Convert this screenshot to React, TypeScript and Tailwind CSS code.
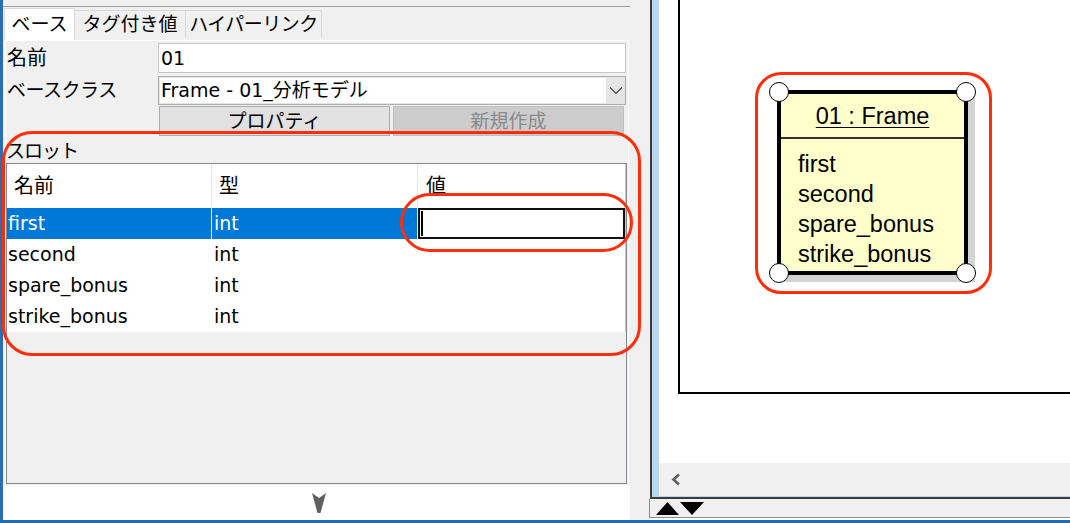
import React from "react";

const JP = { fontFamily: '"DejaVu Sans", "Noto Sans CJK JP", sans-serif' };
const ARIAL = { fontFamily: '"Liberation Sans", Arial, sans-serif' };

function Tabs() {
  return (
    <div className="flex h-[33px] items-start pl-[1px]">
      <div className="mt-[1px] flex h-[32px] w-[71px] items-center justify-center border-l border-t border-r border-[#d9d9d9] bg-white text-[19px] text-black">
        ベース
      </div>
      <div className="mt-[3px] flex h-[28px] w-[111px] items-center justify-center border-t border-r border-[#d9d9d9] bg-[#f0f0f0] text-[19px] text-black">
        タグ付き値
      </div>
      <div className="mt-[3px] flex h-[28px] w-[136px] items-center justify-center border-t border-r border-[#d9d9d9] bg-[#f0f0f0] text-[19px] tracking-[-0.5px] text-black">
        ハイパーリンク
      </div>
    </div>
  );
}

function Chevron() {
  return (
    <svg width="14" height="9" viewBox="0 0 14 9">
      <polyline points="1,1.5 7,7.5 13,1.5" fill="none" stroke="#444" strokeWidth="1.2" />
    </svg>
  );
}

const rows = [
  { name: "first", type: "int", sel: true },
  { name: "second", type: "int" },
  { name: "spare_bonus", type: "int" },
  { name: "strike_bonus", type: "int" },
];

function SlotTable() {
  return (
    <div className="flex h-[321px] w-[621px] flex-col border border-[#828790] bg-[#f0f0f0]">
      <div className="flex h-[44px] bg-white text-[20px] text-black">
        <div className="flex w-[205px] items-center border-r border-[#e5e5e5] pl-[7px]">名前</div>
        <div className="flex w-[206px] items-center border-r border-[#e5e5e5] pl-[7px]">型</div>
        <div className="flex flex-1 items-center border-r border-[#c8c8c8] pl-[8px]">値</div>
      </div>
      {rows.map((r) => (
        <div key={r.name} className="flex h-[31px] bg-white text-[19px]">
          <div
            className={
              r.sel
                ? "flex w-[205px] items-center border-r border-white bg-[#0078d7] pl-[1px] text-white"
                : "flex w-[205px] items-center border-r border-white pl-[1px] text-black"
            }
          >
            {r.name}
          </div>
          <div
            className={
              r.sel
                ? "flex w-[206px] items-center border-r border-white bg-[#0078d7] pl-[2px] text-white"
                : "flex w-[206px] items-center border-r border-white pl-[2px] text-black"
            }
          >
            {r.type}
          </div>
          <div className="flex flex-1 items-stretch border-r border-[#c8c8c8]">
            {r.sel ? (
              <div className="flex flex-1 items-center border-2 border-[#111] bg-white pl-[1px]">
                <div className="h-[25px] w-[2px] bg-black" />
              </div>
            ) : null}
          </div>
        </div>
      ))}
      <div className="flex-1" />
    </div>
  );
}

function LeftPanel() {
  return (
    <div className="flex w-[627px] flex-col">
      <div className="h-[6px]" />
      <div className="h-px bg-[#a0a0a0]" />
      <Tabs />
      <div className="ml-[2px] flex h-[445px] w-[624px] flex-col border-l border-t border-r border-white bg-[#f0f0f0] pt-[2px]">
        <div className="flex h-[30px] items-center">
          <div className="w-[152px] pl-[1px] text-[20px] text-black">名前</div>
          <div className="flex h-[30px] w-[468px] items-center border border-[#c6c6c6] bg-white pl-[2px] text-[19px] text-black">
            01
          </div>
        </div>
        <div className="mt-[2px] flex h-[30px] items-center">
          <div className="w-[152px] pl-[1px] text-[19px] tracking-[-0.5px] text-black">ベースクラス</div>
          <div className="flex h-[29px] w-[468px] items-stretch border border-[#adadad] bg-[#e5e5e5]">
            <div className="m-[1px] flex w-[446px] items-center bg-white pl-[1px] text-[19px] text-black">
              Frame - 01_分析モデル
            </div>
            <div className="flex flex-1 items-center justify-center">
              <Chevron />
            </div>
          </div>
        </div>
        <div className="mt-[1px] flex h-[30px] pl-[152px]">
          <div className="ml-[1px] flex w-[231px] items-center justify-center border border-[#adadad] bg-[#e1e1e1] text-[19px] text-black">
            プロパティ
          </div>
          <div className="ml-[3px] flex w-[231px] items-center justify-center border border-[#bfbfbf] bg-[#cccccc] text-[19px] text-[#8a8a8a]">
            新規作成
          </div>
        </div>
        <div className="flex h-[27px] items-end pb-[1px] text-[19px] leading-[22px] tracking-[-1px] text-black">スロット</div>
        <SlotTable />
      </div>
      <div className="flex h-[35px] items-start justify-center bg-white pl-[4px] pt-[8px]">
        <svg width="14" height="20" viewBox="0 0 14 20">
          <polygon points="0,0 7,5 14,0 8.5,20 5.5,20" fill="#606060" />
        </svg>
      </div>
    </div>
  );
}

function Canvas() {
  return (
    <div className="relative flex-1 overflow-hidden bg-white">
      <div className="absolute left-[19px] top-[-10px] h-[404px] w-[520px] border-2 border-black" />
      <div className="absolute left-[96px] top-[72px] h-[222px] w-[237px] rounded-[26px] border-[3.5px] border-[#ff2d0a]" />
      <div className="absolute left-[118px] top-[90px] h-[185px] w-[191px]">
        <div
          className="flex h-full w-full flex-col border-4 border-black bg-[#ffffcc] shadow-[7px_7px_0_#d4d4d4]"
          style={ARIAL}
        >
          <div className="flex h-[43px] items-center justify-center pt-[3px] text-[23.5px] text-black">
            <span className="underline decoration-1 underline-offset-[3px]">01 : Frame</span>
          </div>
          <div className="h-[2px] bg-[#333]" />
          <div className="flex flex-col pl-[17px] pt-[10px] text-[23.5px] leading-[30px] text-black">
            <div>first</div>
            <div>second</div>
            <div>spare_bonus</div>
            <div>strike_bonus</div>
          </div>
        </div>
        <div className="absolute left-[-8px] top-[-8px] h-[20px] w-[20px] rounded-full border-[1.5px] border-black bg-white" />
        <div className="absolute right-[-8px] top-[-8px] h-[20px] w-[20px] rounded-full border-[1.5px] border-black bg-white" />
        <div className="absolute bottom-[-8px] left-[-8px] h-[20px] w-[20px] rounded-full border-[1.5px] border-black bg-white" />
        <div className="absolute bottom-[-8px] right-[-8px] h-[20px] w-[20px] rounded-full border-[1.5px] border-black bg-white" />
      </div>
    </div>
  );
}

function RightPanel() {
  return (
    <div className="flex w-[421px] flex-col">
      <div className="ml-[1px] flex h-[499px] flex-col border-b-2 border-l-2 border-[#3c3c3c]">
        <div className="flex flex-1 border-b border-[#bcd6ee]">
          <div className="w-[7px] bg-[#bcd6ee]" />
          <div className="flex flex-1 flex-col">
            <Canvas />
            <div className="flex h-[33px] items-center bg-[#f0f0f0] pl-[12px]">
              <svg width="10" height="13" viewBox="0 0 10 13">
                <polyline points="8,1.5 2.5,6.5 8,11.5" fill="none" stroke="#606060" strokeWidth="2.6" />
              </svg>
            </div>
          </div>
        </div>
      </div>
      <div className="flex h-[19px] items-start gap-[1px] border-b border-l border-[#8a8a8a] pl-[6px] pt-[3px]">
        <svg width="23" height="13" viewBox="0 0 23 13">
          <polygon points="11.5,0 23,13 0,13" fill="#000" />
        </svg>
        <svg width="24" height="13" viewBox="0 0 24 13">
          <polygon points="0,0 24,0 12,13" fill="#000" />
        </svg>
      </div>
      <div className="h-[2px] bg-white" />
    </div>
  );
}

export default function App() {
  return (
    <div className="relative flex h-[523px] w-[1070px] flex-col overflow-hidden bg-[#f0f0f0]" style={JP}>
      <div className="flex min-h-0 flex-1">
        <div className="w-[3px] bg-[#2a6db4]" />
        <LeftPanel />
        <div className="w-[19px]" />
        <RightPanel />
      </div>
      <div className="h-[3px] bg-[#1f6cb3]" />
      <div className="pointer-events-none absolute left-[2px] top-[131px] h-[225px] w-[639px] rounded-[30px] border-[3.5px] border-[#ff2d0a]" />
      <div className="pointer-events-none absolute left-[400px] top-[193px] h-[59px] w-[233px] rounded-[30px] border-[3.5px] border-[#ff2d0a]" />
    </div>
  );
}
